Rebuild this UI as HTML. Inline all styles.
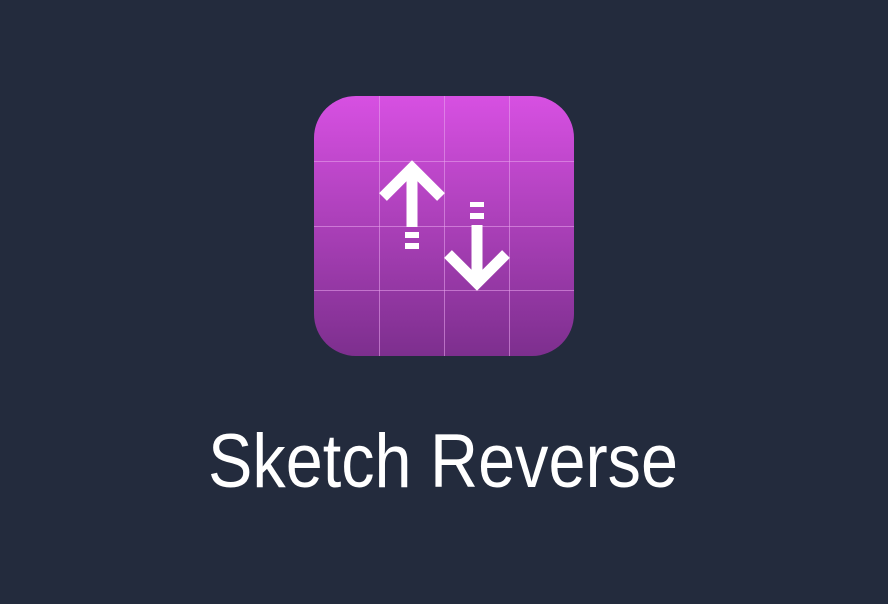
<!DOCTYPE html>
<html><head><style>
html,body{margin:0;padding:0;background:#232b3d;width:888px;height:604px;overflow:hidden}
</style></head><body>
<svg width="888" height="604" viewBox="0 0 888 604" xmlns="http://www.w3.org/2000/svg">
<defs>
<linearGradient id="g" x1="0" y1="0" x2="0" y2="1">
<stop offset="0" stop-color="#d750e2"/>
<stop offset="1" stop-color="#7d2f8e"/>
</linearGradient>
<clipPath id="c"><rect x="314" y="96" width="260" height="260" rx="42"/></clipPath>
</defs>
<rect x="314" y="96" width="260" height="260" rx="42" fill="url(#g)"/>
<g clip-path="url(#c)" stroke="#e9a5ef" stroke-opacity="0.55" stroke-width="1">
<line x1="379.5" y1="96" x2="379.5" y2="356"/>
<line x1="444.5" y1="96" x2="444.5" y2="356"/>
<line x1="509.5" y1="96" x2="509.5" y2="356"/>
<line x1="314" y1="161.5" x2="574" y2="161.5"/>
<line x1="314" y1="226.5" x2="574" y2="226.5"/>
<line x1="314" y1="290.5" x2="574" y2="290.5"/>
</g>
<g fill="none" stroke="#fff" stroke-width="11" stroke-linecap="butt" stroke-linejoin="miter">
<polyline points="383,197 412,168 441,197"/>
<line x1="412" y1="168" x2="412" y2="227"/>
<polyline points="448,254 477,283 506,254"/>
<line x1="477" y1="225" x2="477" y2="283"/>
</g>
<g fill="#fff">
<rect x="405" y="232" width="14" height="6"/>
<rect x="405" y="243" width="14" height="6"/>
<rect x="470" y="202" width="14" height="5"/>
<rect x="470" y="213" width="14" height="6"/>
</g>
<text x="208" y="487" textLength="470" lengthAdjust="spacingAndGlyphs" font-family="Liberation Sans, sans-serif" font-size="76" fill="#fff">Sketch Reverse</text>
</svg>
</body></html>
